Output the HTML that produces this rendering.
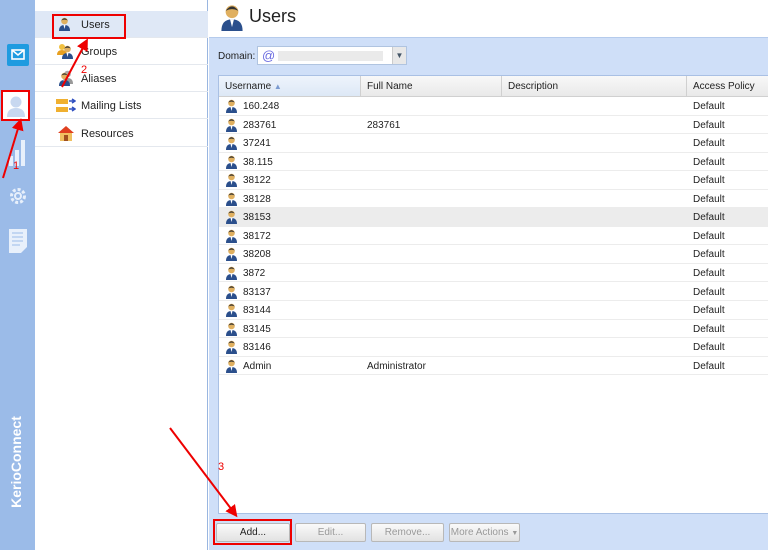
<!DOCTYPE html>
<html><head><style>
*{margin:0;padding:0;box-sizing:border-box}
body{width:768px;height:550px;overflow:hidden;position:relative;font-family:"Liberation Sans",sans-serif;font-size:10px;color:#222;background:#fff}
.abs{position:absolute}
#bar{left:0;top:0;width:35px;height:550px;background:#9bbbe8}
#nav{left:35px;top:0;width:173px;height:550px;background:#fff;border-right:1px solid #9ab6e0}
.ni{position:absolute;left:0;width:173px;height:27px;border-bottom:1px solid #e4e8ee;font-size:11px;line-height:27px;padding-left:46px;padding-top:1px;color:#222}
#hdr{left:209px;top:0;width:559px;height:38px;background:#fff;border-bottom:1px solid #b5cbec}
#main{left:209px;top:38px;width:559px;height:512px;background:#cfdff8}
#grid{left:218px;top:75px;width:550px;height:439px;background:#fff;border:1px solid #a9c0e4;border-right:none}
.hc{position:absolute;top:0;height:21px;line-height:21px;padding-left:6px;border-right:1px solid #d0d0d0;background:linear-gradient(#f8f8f8,#e9e9e9);border-bottom:1px solid #d0d0d0}
.row{position:absolute;left:0;width:550px;height:18.5px;border-bottom:1px solid #ececec;line-height:19px}
.row span{position:absolute}
.ui{position:absolute;left:7px;top:2px;width:11px;height:14px}
.btn{position:absolute;top:523px;height:19px;border:1px solid #b8b8b8;border-radius:2px;background:linear-gradient(#fafafa,#e2e2e2);text-align:center;line-height:17px;color:#999}
</style></head><body>
<svg width="0" height="0" style="position:absolute"><defs>
<g id="u"><circle cx="5.5" cy="4" r="3.3" fill="#e0b060"/><path d="M2.3 3.5 Q5.5 -1 8.7 3.5 Q5.5 1.8 2.3 3.5Z" fill="#333"/><path d="M0 14 Q0 8 5.5 8 Q11 8 11 14Z" fill="#2b4f8c"/><path d="M4.5 8 L5.5 12 L6.5 8Z" fill="#fff"/></g>
</defs></svg>
<div id="bar" class="abs">
 <div class="abs" style="left:7px;top:44px;width:22px;height:22px;background:#1f9be0;border-radius:2px"></div>
 <svg class="abs" style="left:11px;top:49px" width="14" height="12"><rect x="1" y="1" width="12" height="9" fill="none" stroke="#fff" stroke-width="1.6"/><path d="M1 1 L7 6 L13 1" fill="none" stroke="#fff" stroke-width="1.6"/></svg>
 <div class="abs" style="left:2px;top:92px;width:28px;height:28px;background:#fff"></div>
 <svg class="abs" style="left:6px;top:95px" width="20" height="22"><circle cx="10" cy="7" r="5.5" fill="#c8d8f0"/><path d="M1 22 Q1 13 10 13 Q19 13 19 22Z" fill="#c8d8f0"/></svg>
 <div class="abs" style="left:1px;top:90px;width:29px;height:31px;border:2px solid #e00"></div>
 <svg class="abs" style="left:8px;top:138px" width="20" height="28"><rect x="1" y="18" width="4" height="10" fill="#e8f0fb"/><rect x="7" y="12" width="4" height="16" fill="#e8f0fb"/><rect x="13" y="2" width="4" height="26" fill="#e8f0fb"/></svg>
 <svg class="abs" style="left:8px;top:186px" width="20" height="20"><circle cx="10" cy="10" r="6.5" fill="none" stroke="#e8f0fb" stroke-width="3" stroke-dasharray="3 2"/><circle cx="10" cy="10" r="3" fill="none" stroke="#e8f0fb" stroke-width="2"/></svg>
 <svg class="abs" style="left:9px;top:229px" width="18" height="24"><path d="M0 0 H18 V18 L12 24 H0Z" fill="#e8f0fb"/><path d="M3 4h11M3 8h11M3 12h11M3 16h8" stroke="#9bbbe8" stroke-width="1"/></svg>
 <div class="abs" style="left:-34px;top:452px;width:100px;height:20px;transform:rotate(-90deg);color:#fff;font-weight:bold;font-size:14px;text-align:center;line-height:20px">KerioConnect</div>
</div>
<div id="nav" class="abs">
 <div class="ni" style="top:11px;background:#dfe8f6">Users</div>
 <div class="ni" style="top:38px">Groups</div>
 <div class="ni" style="top:65px">Aliases</div>
 <div class="ni" style="top:92px">Mailing Lists</div>
 <div class="ni" style="top:120px">Resources</div>
 <svg class="abs" style="left:24px;top:17px" width="11" height="14"><use href="#u"/></svg>
 <svg class="abs" style="left:22px;top:43px" width="16" height="16"><circle cx="5" cy="4" r="3" fill="#f0c040"/><path d="M0 12 Q0 7 5 7 Q10 7 10 12Z" fill="#e8a020"/><g transform="translate(5,2)"><use href="#u"/></g></svg>
 <svg class="abs" style="left:24px;top:70px" width="14" height="16"><g transform="translate(3,0)"><circle cx="5.5" cy="4" r="3.3" fill="#aaa"/><path d="M0 14 Q0 8 5.5 8 Q11 8 11 14Z" fill="#999"/></g><g transform="translate(0,2)"><use href="#u"/></g></svg>
 <svg class="abs" style="left:21px;top:98px" width="20" height="16"><rect x="0" y="1" width="12" height="5" fill="#f0b030"/><rect x="0" y="9" width="12" height="5" fill="#f0b030"/><path d="M13 3 L19 3 M16 1 L19 3 L16 5 M13 11 L19 11 M16 9 L19 11 L16 13" stroke="#3050c0" stroke-width="1.5" fill="none"/></svg>
 <svg class="abs" style="left:23px;top:126px" width="16" height="15"><path d="M0 7 L8 0 L16 7Z" fill="#e04020"/><rect x="2" y="7" width="12" height="8" fill="#f0c060"/><rect x="6" y="9" width="4" height="6" fill="#a05020"/></svg>
 <div class="abs" style="left:17px;top:14px;width:74px;height:25px;border:2px solid #e00"></div>
</div>
<div id="hdr" class="abs">
 <svg class="abs" style="left:12px;top:4px" width="22" height="27" viewBox="0 0 11 14"><use href="#u"/></svg>
 <div class="abs" style="left:40px;top:6px;font-size:18px;color:#222">Users</div>
</div>
<div id="main" class="abs">
 <div class="abs" style="left:9px;top:13px;font-size:10px">Domain:</div>
 <div class="abs" style="left:48px;top:8px;width:150px;height:19px;background:#fff;border:1px solid #b0c4e0"><span style="position:absolute;left:4px;top:1px;color:#6a6ae0;font-size:13px">@</span><div style="position:absolute;left:20px;top:4px;width:105px;height:10px;background:#eaeaea"></div><div style="position:absolute;right:0;top:0;width:14px;height:17px;background:#e8e8e8;border-left:1px solid #ccc;font-size:8px;text-align:center;line-height:17px;color:#456">&#9660;</div></div>
</div>
<div id="grid" class="abs">
 <div class="hc" style="left:0;width:142px;background:linear-gradient(#eef4fc,#dde8f6)">Username <span style="color:#7a9ad0;font-size:8px">&#9650;</span></div>
 <div class="hc" style="left:142px;width:141px">Full Name</div>
 <div class="hc" style="left:283px;width:185px">Description</div>
 <div class="hc" style="left:468px;width:82px;border-right:none">Access Policy</div>
 <div id="rows"></div>
</div>
<script>
var d=[["160.248",""],["283761","283761"],["37241",""],["38.115",""],["38122",""],["38128",""],["38153",""],["38172",""],["38208",""],["3872",""],["83137",""],["83144",""],["83145",""],["83146",""],["Admin","Administrator"]];
var h="";d.forEach(function(r,i){h+='<div class="row" style="top:'+(21+i*18.55)+'px;'+(i==6?'background:#ececec;':'')+'"><svg class="ui" viewBox="0 0 11 14"><use href="#u"/></svg><span style="left:24px">'+r[0]+'</span><span style="left:148px">'+r[1]+'</span><span style="left:474px">Default</span></div>';});
document.getElementById("rows").outerHTML=h;
</script>
<div class="btn" style="left:216px;width:74px;color:#222">Add...</div>
<div class="btn" style="left:295px;width:71px">Edit...</div>
<div class="btn" style="left:371px;width:73px">Remove...</div>
<div class="btn" style="left:449px;width:71px">More Actions <span style="font-size:7px">&#9660;</span></div>
<div class="abs" style="left:213px;top:519px;width:79px;height:26px;border:2px solid #e00"></div>
<div class="abs" style="left:13px;top:160px;color:#e00;font-size:11px">1</div>
<div class="abs" style="left:81px;top:64px;color:#e00;font-size:11px">2</div>
<div class="abs" style="left:218px;top:461px;color:#e00;font-size:11px">3</div>
<svg class="abs" style="left:0;top:0" width="768" height="550">
<defs><marker id="a" markerWidth="6" markerHeight="6" refX="4" refY="3" orient="auto"><path d="M0 0 L6 3 L0 6Z" fill="#e00"/></marker></defs>
<g stroke="#e00" stroke-width="2" fill="none" marker-end="url(#a)">
<line x1="3" y1="178" x2="20" y2="122"/>
<line x1="62" y1="87" x2="86" y2="42"/>
<line x1="170" y1="428" x2="235" y2="514"/>
</g></svg>
</body></html>
